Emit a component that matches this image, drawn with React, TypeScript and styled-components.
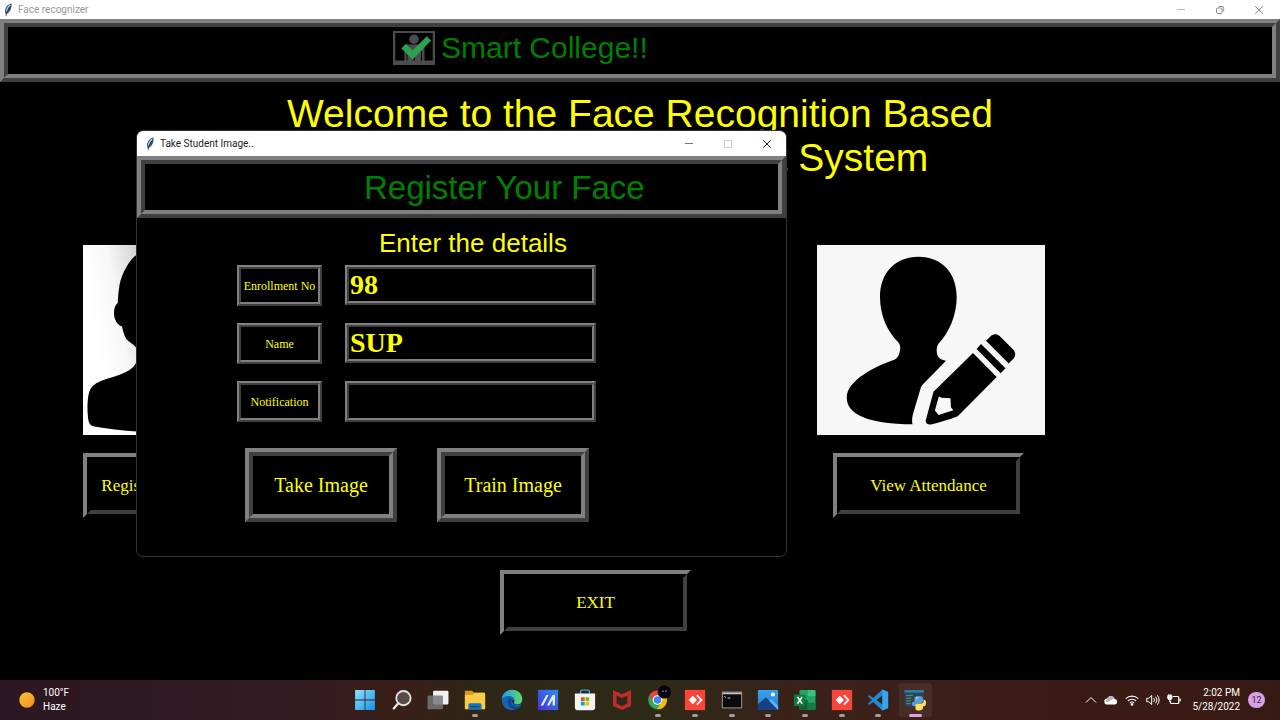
import React from "react";
import styled, { createGlobalStyle, css } from "styled-components";

const LIGHT = "#808080";
const DARK = "#404040";
const YELLOW = "#ffff00";
const UI_FONT = `Roboto, "Open Sans", sans-serif`;
const SANS = `"Liberation Sans", Arial, sans-serif`;
const SERIF = `"Liberation Serif", "Times New Roman", serif`;

const GlobalStyle = createGlobalStyle`
  * { box-sizing: border-box; }
  body { margin: 0; background: #000; font-family: ${SANS}; }
  h1, h2, p { margin: 0; font-weight: 400; }
  button, input { font: inherit; margin: 0; }
  svg { display: block; flex-shrink: 0; }
`;

const Desktop = styled.div`
  position: relative;
  display: flex;
  flex-direction: column;
  min-height: 100vh;
  overflow: hidden;
  background: #000;
`;

/* Window chrome */
const TitleBar = styled.header<{ $height: number; $active?: boolean }>`
  display: flex;
  align-items: center;
  height: ${(p) => p.$height}px;
  padding: ${(p) => (p.$active ? "0 0 0 9px" : "0 2px 0 4px")};
  background: #fff;
  color: ${(p) => (p.$active ? "#1c1c1c" : "#999")};
  font: 10px/14px ${UI_FONT};
`;

const WindowTitle = styled.span`
  flex: 1;
  padding-left: 6px;
`;

const CaptionButton = styled.button<{ $color: string }>`
  display: flex;
  align-items: center;
  justify-content: center;
  width: 39px;
  height: 100%;
  padding: 0;
  border: 0;
  background: none;
  color: ${(p) => p.$color};
`;

/* Two-ring bevels: the outer ring sits on the element, the inner one on its child */
const outerRing = css<{ $ring: number; $raised?: boolean }>`
  border: ${(p) => p.$ring}px solid;
  border-color: ${(p) =>
    p.$raised ? `${LIGHT} #000 #000 ${LIGHT}` : `${LIGHT} ${DARK} ${DARK} ${LIGHT}`};
`;

const InnerRing = styled.span<{ $ring: number; $raised?: boolean }>`
  display: flex;
  flex: 1;
  align-items: center;
  justify-content: center;
  border: ${(p) => p.$ring}px solid;
  border-color: ${(p) =>
    p.$raised ? `#000 ${DARK} ${DARK} #000` : `${DARK} ${LIGHT} ${LIGHT} ${DARK}`};
`;

const Banner = styled.div<{ $ring: number }>`
  ${outerRing}
  display: flex;
`;

const BannerInner = styled.div<{ $indent: number; $height: number }>`
  display: flex;
  flex: 1;
  gap: 6px;
  height: ${(p) => p.$height}px;
  padding: 4px 0 0 ${(p) => p.$indent}px;
  border: 4px solid;
  border-color: ${DARK} ${LIGHT} ${LIGHT} ${DARK};
  color: #008000;
`;

const BrandName = styled.p`
  font-size: 30px;
  line-height: 34px;
`;

const DialogHeading = styled.h2`
  font-size: 33px;
  line-height: 40px;
`;

const BevelButton = styled.button<{
  $ring: number;
  $raised?: boolean;
  $width: number;
  $height: number;
  $size: number;
}>`
  ${outerRing}
  display: flex;
  width: ${(p) => p.$width}px;
  height: ${(p) => p.$height}px;
  padding: 0;
  background: #000;
  color: ${YELLOW};
  font-family: ${SERIF};
  font-size: ${(p) => p.$size}px;
  line-height: 24px;
  white-space: nowrap;
`;

/* Main window */
const Main = styled.main`
  display: flex;
  flex: 1;
  flex-direction: column;
  padding-top: 10px;
`;

const Welcome = styled.h1`
  color: ${YELLOW};
  font-size: 39px;
  line-height: 44px;
  text-align: center;
`;

const Cards = styled.div`
  display: flex;
  justify-content: space-between;
  margin-top: 65px;
  padding: 0 235px 0 83px;
`;

const Card = styled.section<{ $indent?: number }>`
  display: flex;
  flex-direction: column;
  gap: 18px;
  width: 228px;

  > button {
    margin-left: ${(p) => p.$indent ?? 0}px;
  }
`;

const ExitRow = styled.div`
  margin-top: 52px;
  padding-left: 500px;
`;

/* Dialog */
const Dialog = styled.section`
  position: absolute;
  top: 130px;
  left: 136px;
  width: 651px;
  overflow: hidden;
  border: 1px solid #333;
  border-radius: 7px;
  background: #000;
`;

const DialogBody = styled.form`
  padding: 10px 100px 34px;
`;

const FormTitle = styled.p`
  padding-left: 142px;
  color: ${YELLOW};
  font-size: 26px;
  line-height: 30px;
`;

const Fields = styled.div`
  display: grid;
  grid-template-columns: 85px 251px;
  align-items: start;
  gap: 17px 23px;
  margin-top: 7px;
`;

const FieldLabel = styled.label<{ $ring: number }>`
  ${outerRing}
  display: flex;
  height: 41px;
  color: ${YELLOW};
  font-family: ${SERIF};
  font-size: 12px;
  line-height: 16px;
  white-space: nowrap;
`;

const Entry = styled.div<{ $ring: number; $height: number }>`
  ${outerRing}
  display: flex;
  height: ${(p) => p.$height}px;
`;

const EntryInput = styled.input`
  flex: 1;
  min-width: 0;
  padding: 0 1px;
  border: 2px solid;
  border-color: ${DARK} ${LIGHT} ${LIGHT} ${DARK};
  border-radius: 0;
  outline: 0;
  background: #000;
  color: ${YELLOW};
  font-family: ${SERIF};
  font-size: 28px;
  font-weight: 700;
`;

const Actions = styled.div`
  display: flex;
  gap: 40px;
  margin-top: 26px;
  padding-left: 8px;
`;

/* Taskbar */
const Taskbar = styled.footer`
  display: grid;
  grid-template-columns: 1fr 587px 1fr;
  align-items: center;
  height: 40px;
  background: linear-gradient(
    90deg,
    #2c1722 0%,
    #331b22 24%,
    #3a1f18 31%,
    #2e2617 37%,
    #2d2a17 50%,
    #38221a 62%,
    #3d1f19 73%,
    #3a1a14 85%,
    #381a14 100%
  );
  color: #fff;
  font: 10px/14px ${UI_FONT};
`;

const Weather = styled.div`
  display: flex;
  align-items: center;
  gap: 8px;
  padding-left: 19px;
`;

const Apps = styled.nav`
  display: grid;
  grid-template-columns: repeat(16, 1fr);
  height: 40px;
`;

const AppButton = styled.button<{ $state?: "running" | "active" }>`
  display: flex;
  flex-direction: column;
  align-items: center;
  justify-content: flex-end;
  gap: 3px;
  margin: 3px 2px;
  padding: 0;
  border: 0;
  border-radius: 3px;
  background: ${(p) => (p.$state === "active" ? "rgba(255,255,255,0.06)" : "none")};

  &::after {
    content: "";
    width: ${(p) => (p.$state === "active" ? 13 : 6)}px;
    height: 3px;
    border-radius: 2px;
    background: ${(p) =>
      p.$state === "active" ? "#dba3e6" : p.$state ? "#a39c94" : "transparent"};
  }
`;

const Tray = styled.div`
  display: flex;
  align-items: center;
  justify-content: flex-end;
  gap: 7px;
  padding-right: 15px;
`;

const Clock = styled.div`
  margin-left: 4px;
  text-align: right;
`;

const Badge = styled.span`
  display: flex;
  align-items: center;
  justify-content: center;
  width: 17px;
  height: 16px;
  margin-left: 1px;
  border-radius: 8px;
  background: #d9a0e6;
  color: #3a1d3c;
  font-size: 9px;
`;

/* Drawings */
const Feather = () => (
  <svg width="8" height="14" viewBox="0 0 8 14">
    <path d="M7.400.4C4.400.7 1.300 3.800.9 8.200l.5 2.200.6 1.600 1-1.400C5.900 9.600 8.200 5 7.400.4Z" fill="#35577f" />
    <path d="M6.200 2C4.400 3.200 2.800 5.800 2.400 8.600" fill="none" stroke="#a9c6e8" strokeWidth="1.300" />
    <path d="M5.800 4C4.200 6.500 2.600 9.500 2 13.200" fill="none" stroke="#1b1b1b" strokeWidth=".6" />
  </svg>
);

const Minimize = () => (
  <svg width="10" height="10" viewBox="0 0 10 10">
    <path d="M1 4.500h8" stroke="currentColor" />
  </svg>
);

const Maximize = () => (
  <svg width="10" height="10" viewBox="0 0 10 10" fill="none" stroke="currentColor">
    <rect x="1.500" y="1.500" width="7" height="7" />
  </svg>
);

const Restore = () => (
  <svg width="10" height="10" viewBox="0 0 10 10" fill="none" stroke="currentColor">
    <rect x="1.500" y="3" width="5.500" height="5.500" rx="1" />
    <path d="M3.500 1.500h3.500a1.700 1.700 0 0 1 1.700 1.700v3.300" />
  </svg>
);

const Close = () => (
  <svg width="10" height="10" viewBox="0 0 10 10">
    <path d="m1.200 1.200 7.600 7.600m0-7.600L1.200 8.800" stroke="currentColor" />
  </svg>
);

const CollegeLogo = () => (
  <svg width="42" height="34" viewBox="0 0 42 34">
    <path d="M0 0h42v34H0Zm2.300 2v27.500h37.400V2Z" fill="#4c4c4e" fillRule="evenodd" />
    <circle cx="21" cy="8.300" r="4.700" fill="#4c4c4e" />
    <path d="M11.500 13.500h20v17h-2.500V20h-1v11h-6.200v-5h-1.300v5h-6V20h-.8v11h-2.200Z" fill="#4c4c4e" />
    <path d="m8.300 17.200 4.800-4.200 6.400 6.600L33.800 5.300l4.400 4.200L19.500 28.400Z" fill="#2fa050" />
  </svg>
);

const StudentPhoto = () => (
  <svg width="228" height="190" viewBox="0 0 228 190" role="img" aria-label="Student silhouette">
    <defs>
      <linearGradient id="studentBg" x1="0" x2="1" y1=".15" y2="0">
        <stop offset="0" stopColor="#fff" />
        <stop offset=".12" stopColor="#f8f8f8" />
        <stop offset=".26" stopColor="#cfcfcf" />
        <stop offset="1" stopColor="#fff" />
      </linearGradient>
    </defs>
    <rect width="228" height="190" fill="url(#studentBg)" />
    <path
      d="M85 3C72 3 61 5 53.700 9.700 46 15 39 28 36.500 40 35.500 46 35 52 34.700 58 32 60 31 64 31 68 31 74 34 80 39 81.500 40 86 41 90 43 93.500 46 97 50 99 53 102.500 54.500 106 55 112 54 116 52 121 48 125 42 127.500 35 131 27 132.500 19 135.500 13 138 9.500 140.500 7.500 144 4 150 4 166 5.200 174 5.700 178 7 180.500 10 181.200 24 184 40 185.500 54 186.500 90 189 140 188 162 180 166 170 165 152 158 142 148 133 128 135 118 122 114 116 116 108 118 104 124 99 128 92 130 82 136 77 137 66 134 58 135 28 128 3 85 3Z"
      fill="#000"
    />
  </svg>
);

const AttendancePhoto = () => (
  <svg width="228" height="190" viewBox="0 0 228 190" role="img" aria-label="Person with a pencil">
    <rect width="228" height="190" fill="#f7f7f7" />
    <path
      d="M101.500 11.700C78 11.700 63 28 63 52c0 18 7 34 18 45 3 3 2.500 8 1.300 11.500-1 3.500-2.800 5-5 6.200C59 121 30 135 29.800 152 29 170 53 179 95.500 179.300c-.8-4-.3-7 .7-11l7.600-25.500c.4-1.400 1-2.400 2-3.400L129 115.700c-3-.5-6-1.500-7.500-3.700-2.200-3-2.500-9.500-.2-13C132 88 139.700 70 139.700 52c0-24-14.700-40.300-38.200-40.300Z"
      fill="#000"
    />
    <path d="M156 108 179.700 132l-39 39.300c-8.500 3.500-17.700 6-26.700 8.200-3 .5-5.500-1-5.300-4l7.800-28.800Z" fill="#000" />
    <path d="m121.800 151.500 3 1.200 8.700.6.400 9 2.500 3L121.500 170l-3.600-4.500Z" fill="#f7f7f7" />
    <path d="m164 99 24.500 24.300-4.900 4.900-24-24.200Z" fill="#000" />
    <path d="m169 95.700 5.200-5c2.600-2.200 6-2 8.400.3l13.500 13.500c2.700 2.800 2.700 6.500.5 9l-4.900 4.900Z" fill="#000" />
  </svg>
);

const AppSvg = ({ children }: { children: React.ReactNode }) => (
  <svg width="22" height="22" viewBox="0 0 20 20">
    {children}
  </svg>
);

const StartIcon = () => (
  <AppSvg>
    <defs>
      <linearGradient id="startFill" x1="0" y1="0" x2="1" y2="1">
        <stop offset="0" stopColor="#8ee2fb" />
        <stop offset="1" stopColor="#1593ea" />
      </linearGradient>
    </defs>
    <path d="M1 1h8.600v8.600H1Zm9.400 0H19v8.600h-8.600ZM1 10.400h8.600V19H1Zm9.400 0H19V19h-8.600Z" fill="url(#startFill)" />
  </AppSvg>
);

const SearchIcon = () => (
  <AppSvg>
    <circle cx="11.300" cy="8.300" r="6.500" fill="#5a4a46" stroke="#e4e4e4" strokeWidth="1.700" />
    <path d="m6.700 13-4.200 4.700" stroke="#e4e4e4" strokeWidth="2.200" strokeLinecap="round" />
  </AppSvg>
);

const TaskViewIcon = () => (
  <AppSvg>
    <rect x="5.500" y="1.500" width="14" height="12.500" rx="1" fill="#f1f1f1" />
    <rect x=".5" y="6" width="14" height="12.500" rx="1" fill="#777" opacity=".85" />
  </AppSvg>
);

const FolderIcon = () => (
  <AppSvg>
    <path d="M.8 1.500h6.500l2 2h8.500c.8 0 1.400.6 1.400 1.400V17H.8Z" fill="#d99a1b" />
    <path d="M.8 5.500h6.700l2-2h8.700c.6 0 1 .4 1 1V18.500H.8Z" fill="#fccb45" />
    <path d="M4 18.500v-4c0-.8.600-1.500 1.400-1.500h9.200c.8 0 1.400.7 1.400 1.500v4Z" fill="#1675c0" />
    <path d="M6 15.500h8v1.200H6Z" fill="#0d4f8e" />
  </AppSvg>
);

const EdgeIcon = () => (
  <AppSvg>
    <defs>
      <linearGradient id="edgeTop" x1="0" x2="1">
        <stop offset="0" stopColor="#1e9fe0" />
        <stop offset="1" stopColor="#62d96b" />
      </linearGradient>
    </defs>
    <circle cx="10" cy="10" r="9.300" fill="#1467b8" />
    <path d="M.7 10C.7 4.500 4.700.7 10 .7s9.300 3.800 9.300 8.300c0 3-2 5-4.800 5-2 0-3-.8-3-1.500 0-.5.700-1 .7-2.300C12.200 8 10 6.300 7.300 6.300 3.500 6.300.7 8 .7 10Z" fill="url(#edgeTop)" />
    <path d="M7 8.500c-2.300 3-.8 8.300 4.300 9.800 2.800.6 5.500-.5 7-3.300-3 1.700-7 1-8.300-1.200-1-1.600-.6-3 .3-4C9.500 8.700 8 8 7 8.500Z" fill="#12488c" />
    <path d="M10.300 10c-.6 1.200-.2 2.700 1.200 3.600 2 1.100 4.700 1 7 0 .8-.6.800-1.600.8-1.600-1.300 1.500-2.900 2-4.800 2-2 0-3-.8-3-1.500 0-.5.700-1 .7-2.300Z" fill="#302a19" />
  </AppSvg>
);

const MyAsusIcon = () => (
  <AppSvg>
    <defs>
      <linearGradient id="myAsus" x1="0" y1="1" x2="1" y2="0">
        <stop offset="0" stopColor="#4a30d8" />
        <stop offset="1" stopColor="#2b8df5" />
      </linearGradient>
    </defs>
    <rect x=".8" y=".8" width="18.400" height="18.400" fill="url(#myAsus)" />
    <path d="m3.300 15 5.200-9.500h2L5.600 15Zm5.700 0 3.500-6.500 1.700-3H16.300V15h-2.100V9.500L11.200 15Z" fill="#e8ecff" />
  </AppSvg>
);

const StoreIcon = () => (
  <AppSvg>
    <path d="M6 5V2.300C6 1.500 6.500 1 7.300 1h5.400c.8 0 1.300.5 1.300 1.300V5" fill="none" stroke="#35a8e0" strokeWidth="1.300" />
    <path d="M.8 4.200h18.400v12.600c0 1.500-1 2.500-2.500 2.500H3.300c-1.500 0-2.500-1-2.500-2.500Z" fill="#f4f4f4" />
    <path d="M6.300 7.500h3.400v3.400H6.300Z" fill="#f25022" />
    <path d="M10.400 7.500h3.400v3.400h-3.400Z" fill="#7fba00" />
    <path d="M6.300 11.600h3.400V15H6.300Z" fill="#00a4ef" />
    <path d="M10.400 11.600h3.400V15h-3.400Z" fill="#ffb900" />
  </AppSvg>
);

const McAfeeIcon = () => (
  <AppSvg>
    <path d="m1.800.8 8.200 4 8.200-4v14.700L10 19.200l-8.200-3.700Zm3.300 5v7.400l4.900 2.400 4.900-2.400V5.800L10 8.200Z" fill="#bd2b2e" fillRule="evenodd" />
  </AppSvg>
);

const ChromeIcon = () => (
  <svg width="26" height="26" viewBox="0 0 26 26">
    <circle cx="12.500" cy="15" r="9.300" fill="#34a853" />
    <path d="M4.400 10.300a9.300 9.300 0 0 1 16.200 0L12.500 10.500Z" fill="#ea4335" />
    <path d="M20.600 10.300A9.300 9.300 0 0 1 12 24.300l4.500-7-4-7Z" fill="#fbbc05" />
    <path d="m4.400 10.300 4.500 7 3.600-7Z" fill="#ea4335" />
    <circle cx="12.500" cy="15" r="4.800" fill="#fff" />
    <circle cx="12.500" cy="15" r="3.700" fill="#4285f4" />
    <circle cx="19.300" cy="7" r="6.600" fill="#050308" />
    <path d="M17.300 6.300h1.400m1.500 0h1.400" stroke="#8a6fd8" strokeWidth="1.400" />
  </svg>
);

const AnyDeskIcon = () => (
  <AppSvg>
    <rect x=".8" y=".8" width="18.400" height="18.400" fill="#f9443a" />
    <path d="m8 6.200 3.800 3.800L8 13.800 4.200 10Z" fill="#fff" />
    <path d="m11 6.200 1.300-.9L17 10l-4.700 4.700-1.300-.9L14.700 10Z" fill="#fff" />
  </AppSvg>
);

const TerminalIcon = () => (
  <AppSvg>
    <rect x="1.200" y="2.800" width="17.600" height="14.400" fill="#0b0b0b" stroke="#999" strokeWidth=".9" />
    <path d="M1.600 3.200h16.800v1.600H1.600Z" fill="#c4c4c4" />
    <path d="m3 6.600 1.700 1.300M6 8.200h2.500" stroke="#ccc" strokeWidth=".9" />
  </AppSvg>
);

const PhotosIcon = () => (
  <AppSvg>
    <defs>
      <linearGradient id="photosBg" x1="0" y1="0" x2="0" y2="1">
        <stop offset="0" stopColor="#37a5ee" />
        <stop offset="1" stopColor="#2478d4" />
      </linearGradient>
    </defs>
    <rect x=".8" y=".8" width="18.400" height="18.400" rx="1" fill="url(#photosBg)" />
    <path d="M.8 14 8 7.500l11.200 11.700H.8Z" fill="#17427f" />
    <path d="m11 10.700 2-1.700 6.200 6.200v4Z" fill="#5bb7f3" />
    <circle cx="14.500" cy="5" r="1.800" fill="#fff" />
  </AppSvg>
);

const ExcelIcon = () => (
  <AppSvg>
    <rect x="5" y="1" width="14.500" height="18" rx="1" fill="#21a366" />
    <path d="M12.500 1h6a1 1 0 0 1 1 1v4.500h-7Z" fill="#33c481" />
    <path d="M5 10h7.500v9H6a1 1 0 0 1-1-1Z" fill="#185c37" />
    <path d="M12.500 12.500h7V18a1 1 0 0 1-1 1h-6Z" fill="#107c41" />
    <rect y="5" width="10.500" height="10.500" rx="1" fill="#107c41" />
    <path d="m3.200 7.300 4.200 6m0-6-4.200 6" stroke="#fff" strokeWidth="1.500" />
  </AppSvg>
);

const VsCodeIcon = () => (
  <AppSvg>
    <path d="m14 .5 5.200 2.300v14.400L14 19.500 5.500 11.800 2.300 14.300.8 13.400 4.500 10 .8 6.600l1.500-.9 3.200 2.500Z" fill="#1f8ad2" />
    <path d="M14 5.800 8.700 10l5.300 4.200Z" fill="#3a221b" />
    <path d="m14 .5 5.200 2.300v14.400L14 19.500Z" fill="#35a5f0" />
  </AppSvg>
);

const PythonIcon = () => (
  <AppSvg>
    <rect x=".5" y="1" width="17.500" height="15" fill="#27465a" />
    <path d="M.5 1H18v2.300H.5Z" fill="#2f7fa6" />
    <path d="M2 5.800h6M2 8.300h4.500M2 10.800h4M2 13.300h4" stroke="#6f9a6a" strokeWidth=".8" />
    <path d="M9.500 11.500V8.600c0-1.500 1-2.300 4-2.300s3.700.8 3.700 2.200v2.500c0 1-.7 1.700-1.700 1.700h-3.200c-1 0-1.700.7-1.700 1.700v1.200H9.300c-1.300 0-2-1.100-2-2.200s.7-1.900 2.200-1.900Z" fill="#5ba0dc" />
    <path d="M17.700 9.800h.5c1.300 0 1.800 1.500 1.800 2.900s-.5 2.900-1.800 2.900h-.9v1.500c0 1.500-1.300 2.400-3.600 2.400s-3.300-.9-3.300-2.100v-2.600c0-1 .7-1.700 1.700-1.700h3.500c1.300 0 2.100-.8 2.100-1.800Z" fill="#ffdf5d" />
    <circle cx="11.600" cy="8.200" r=".7" fill="#fff" />
  </AppSvg>
);

const SunIcon = () => (
  <svg width="16" height="16" viewBox="0 0 16 16">
    <defs>
      <linearGradient id="sun" x1="0" y1="0" x2="1" y2="1">
        <stop offset="0" stopColor="#fcc534" />
        <stop offset="1" stopColor="#ef8d1d" />
      </linearGradient>
    </defs>
    <circle cx="8" cy="8" r="7.700" fill="url(#sun)" />
  </svg>
);

const TrayChevron = () => (
  <svg width="12" height="14" viewBox="0 0 12 14" fill="none" stroke="#fff">
    <path d="m1 9.500 5-5 5 5" />
  </svg>
);

const TrayCloud = () => (
  <svg width="14" height="14" viewBox="0 0 14 14">
    <path d="M3.500 11.500a3 3 0 0 1-.4-6A4.200 4.200 0 0 1 10.800 6a2.800 2.800 0 0 1 .2 5.500Z" fill="#fff" />
    <path d="M3.100 5.500a4.200 4.200 0 0 1 7.500-.2L3 9.500a2.800 2.800 0 0 1 .1-4Z" fill="#bdb5b3" />
  </svg>
);

const TrayWifi = () => (
  <svg width="14" height="14" viewBox="0 0 14 14" fill="none" stroke="#fff" strokeWidth="1.100">
    <path d="M.8 5.700a8.800 8.800 0 0 1 12.400 0M2.800 7.900a6 6 0 0 1 8.400 0M4.800 10a3.200 3.200 0 0 1 4.400 0" />
    <circle cx="7" cy="11.500" r=".8" fill="#fff" />
  </svg>
);

const TraySpeaker = () => (
  <svg width="14" height="14" viewBox="0 0 14 14" fill="none" stroke="#fff">
    <path d="M.7 5.300h2l3-2.800v9l-3-2.800h-2Z" />
    <path d="M7.800 5.200a3 3 0 0 1 0 3.600M9.600 3.700a5 5 0 0 1 0 6.600M11.400 2.300a7.300 7.300 0 0 1 0 9.400" />
  </svg>
);

const TrayBattery = () => (
  <svg width="14" height="14" viewBox="0 0 14 14" fill="none" stroke="#fff">
    <path d="M5.500 3.500h5.300c.6 0 1 .4 1 1v5c0 .6-.4 1-1 1H4.500c-.6 0-1-.4-1-1V8M13.200 5.700v2.600" strokeWidth="1.200" />
    <path d="M.8 2.500h4v2.700c0 1-.8 1.500-2 1.500s-2-.5-2-1.500ZM1.800 1v1.500M3.800 1v1.500M2.800 6.700V9" fill="#fff" />
  </svg>
);

type AppEntry = { name: string; icon: React.ReactNode; state?: "running" | "active" };

const APPS: AppEntry[] = [
  { name: "Start", icon: <StartIcon /> },
  { name: "Search", icon: <SearchIcon /> },
  { name: "Task View", icon: <TaskViewIcon /> },
  { name: "File Explorer", icon: <FolderIcon />, state: "running" },
  { name: "Edge", icon: <EdgeIcon /> },
  { name: "MyASUS", icon: <MyAsusIcon /> },
  { name: "Store", icon: <StoreIcon /> },
  { name: "McAfee", icon: <McAfeeIcon /> },
  { name: "Chrome", icon: <ChromeIcon />, state: "running" },
  { name: "AnyDesk", icon: <AnyDeskIcon />, state: "running" },
  { name: "Command Prompt", icon: <TerminalIcon />, state: "running" },
  { name: "Photos", icon: <PhotosIcon />, state: "running" },
  { name: "Excel", icon: <ExcelIcon />, state: "running" },
  { name: "AnyDesk session", icon: <AnyDeskIcon />, state: "running" },
  { name: "Visual Studio Code", icon: <VsCodeIcon />, state: "running" },
  { name: "Python", icon: <PythonIcon />, state: "active" },
];

const RaisedButton = ({ children }: { children: React.ReactNode }) => (
  <BevelButton type="button" $ring={4} $raised $width={191} $height={65} $size={17}>
    <InnerRing $ring={4} $raised>
      {children}
    </InnerRing>
  </BevelButton>
);

const RidgeButton = ({ children }: { children: React.ReactNode }) => (
  <BevelButton type="button" $ring={4} $width={152} $height={74} $size={20}>
    <InnerRing $ring={4}>{children}</InnerRing>
  </BevelButton>
);

const Field = ({ id, label, value, readOnly }: { id: string; label: string; value: string; readOnly?: boolean }) => (
  <>
    <FieldLabel htmlFor={id} $ring={2}>
      <InnerRing $ring={2}>{label}</InnerRing>
    </FieldLabel>
    <Entry $ring={2} $height={readOnly ? 41 : 40}>
      <EntryInput id={id} type="text" defaultValue={value} readOnly={readOnly} />
    </Entry>
  </>
);

export default function App() {
  return (
    <Desktop>
      <GlobalStyle />
      <TitleBar $height={19}>
        <Feather />
        <WindowTitle>Face recognizer</WindowTitle>
        <CaptionButton type="button" aria-label="Minimize" $color="#b5b5b5"><Minimize /></CaptionButton>
        <CaptionButton type="button" aria-label="Restore" $color="#8c8c8c"><Restore /></CaptionButton>
        <CaptionButton type="button" aria-label="Close" $color="#8c8c8c"><Close /></CaptionButton>
      </TitleBar>
      <Banner $ring={4}>
        <BannerInner $indent={385} $height={55}>
          <CollegeLogo />
          <BrandName>Smart College!!</BrandName>
        </BannerInner>
      </Banner>

      <Main>
        <Welcome>
          Welcome to the Face Recognition Based
          <br />
          Attendance Management System
        </Welcome>
        <Cards>
          <Card>
            <StudentPhoto />
            <RaisedButton>Register a new student</RaisedButton>
          </Card>
          <Card $indent={16}>
            <AttendancePhoto />
            <RaisedButton>View Attendance</RaisedButton>
          </Card>
        </Cards>
        <ExitRow>
          <RaisedButton>EXIT</RaisedButton>
        </ExitRow>
      </Main>

      <Dialog role="dialog" aria-label="Take Student Image">
        <TitleBar $height={25} $active>
          <Feather />
          <WindowTitle>Take Student Image..</WindowTitle>
          <CaptionButton type="button" aria-label="Minimize" $color="#777"><Minimize /></CaptionButton>
          <CaptionButton type="button" aria-label="Maximize" $color="#d0d0d0" disabled><Maximize /></CaptionButton>
          <CaptionButton type="button" aria-label="Close" $color="#222"><Close /></CaptionButton>
        </TitleBar>
        <Banner $ring={4}>
          <BannerInner $indent={219} $height={54}>
            <DialogHeading>Register Your Face</DialogHeading>
          </BannerInner>
        </Banner>
        <DialogBody>
          <FormTitle>Enter the details</FormTitle>
          <Fields>
            <Field id="enrollment" label="Enrollment No" value="98" />
            <Field id="name" label="Name" value="SUP" />
            <Field id="notification" label="Notification" value="" readOnly />
          </Fields>
          <Actions>
            <RidgeButton>Take Image</RidgeButton>
            <RidgeButton>Train Image</RidgeButton>
          </Actions>
        </DialogBody>
      </Dialog>

      <Taskbar>
        <Weather>
          <SunIcon />
          <div>
            <div>100°F</div>
            <div>Haze</div>
          </div>
        </Weather>
        <Apps aria-label="Taskbar">
          {APPS.map((app) => (
            <AppButton key={app.name} type="button" aria-label={app.name} $state={app.state}>
              {app.icon}
            </AppButton>
          ))}
        </Apps>
        <Tray>
          <TrayChevron />
          <TrayCloud />
          <TrayWifi />
          <TraySpeaker />
          <TrayBattery />
          <Clock>
            <div>2:02 PM</div>
            <div>5/28/2022</div>
          </Clock>
          <Badge>12</Badge>
        </Tray>
      </Taskbar>
    </Desktop>
  );
}
